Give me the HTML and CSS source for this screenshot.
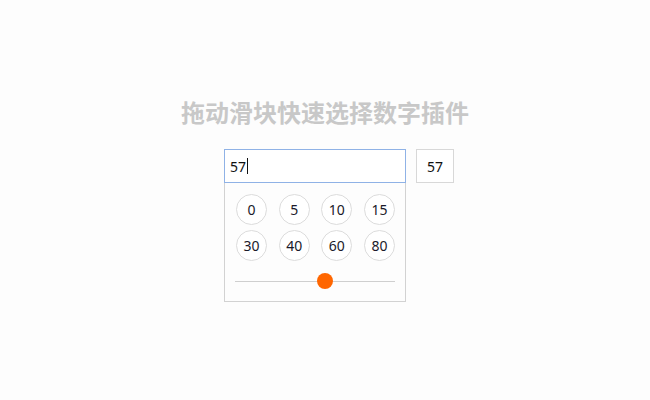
FILE: index.html
```html
<!DOCTYPE html>
<html lang="zh">
<head>
<meta charset="utf-8">
<title>拖动滑块快速选择数字插件</title>
<link rel="stylesheet" href="styles.css">
</head>
<body>
<div class="page">
  <h1 class="title">拖动滑块快速选择数字插件</h1>
  <div class="widget">
    <div class="picker">
      <div class="input"><span class="value">57</span><span class="caret"></span></div>
      <div class="panel">
        <div class="grid">
          <span class="num">0</span>
          <span class="num">5</span>
          <span class="num">10</span>
          <span class="num">15</span>
          <span class="num">30</span>
          <span class="num">40</span>
          <span class="num">60</span>
          <span class="num">80</span>
        </div>
        <div class="slider">
          <div class="track"></div>
          <div class="thumb" style="left: 82px"></div>
        </div>
      </div>
    </div>
    <div class="output">57</div>
  </div>
</div>
</body>
</html>
```
FILE: styles.css
```css
html, body {
  margin: 0;
  padding: 0;
  background: #fdfdfd;
}
body {
  font-family: "Noto Sans", "Noto Sans CJK SC", sans-serif;
  color: #222;
}
.page {
  width: 650px;
  height: 400px;
  padding-top: 98px;
  box-sizing: border-box;
}
.title {
  margin: 0;
  font-family: "Noto Sans CJK SC", sans-serif;
  font-weight: 700;
  font-size: 24px;
  line-height: 28px;
  color: #c8c8c8;
  text-align: center;
}
.widget {
  display: flex;
  align-items: flex-start;
  gap: 10px;
  padding-left: 224px;
  margin-top: 23px;
}
.picker {
  width: 182px;
  display: flex;
  flex-direction: column;
}
.input {
  height: 34px;
  box-sizing: border-box;
  border: 1px solid #8fb2e6;
  padding-left: 5px;
  display: flex;
  align-items: center;
  font-size: 14px;
  color: #111;
  background: #fff;
}
.caret {
  display: inline-block;
  width: 1px;
  height: 16px;
  background: #111;
  margin-left: 1px;
}
.panel {
  border: 1px solid #d2d2d2;
  border-top: none;
  background: #fdfdfd;
  padding: 11px 10px 12px 10px;
}
.grid {
  display: grid;
  grid-template-columns: repeat(4, 31px);
  justify-content: space-between;
  row-gap: 5px;
  padding: 0 0 0 1px;
}
.num {
  width: 31px;
  height: 31px;
  box-sizing: border-box;
  border: 1px solid #dcdcdc;
  border-radius: 50%;
  display: flex;
  align-items: center;
  justify-content: center;
  font-size: 14px;
  color: #1a1a2a;
  background: #fff;
}
.slider {
  position: relative;
  height: 16px;
  margin-top: 12px;
}
.track {
  position: absolute;
  left: 0;
  right: 0;
  top: 8px;
  height: 1px;
  background: #cfcfcf;
}
.thumb {
  position: absolute;
  top: 0;
  width: 16px;
  height: 16px;
  border-radius: 50%;
  background: #ff6600;
}
.output {
  width: 38px;
  height: 34px;
  box-sizing: border-box;
  border: 1px solid #d8d8d8;
  display: flex;
  align-items: center;
  justify-content: center;
  font-size: 14px;
  color: #111;
  background: #fff;
}
```
